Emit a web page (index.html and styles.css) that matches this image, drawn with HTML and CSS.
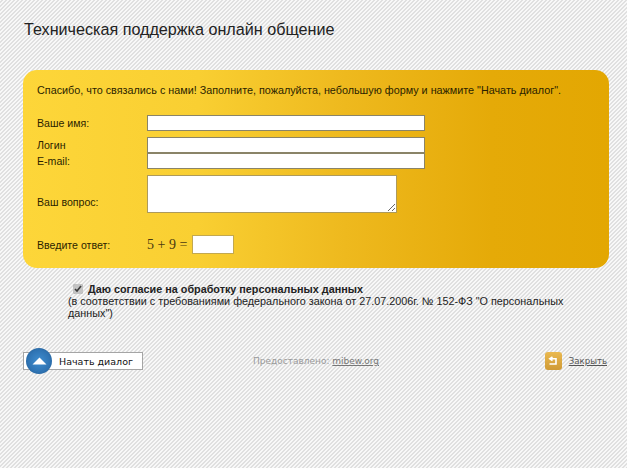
FILE: index.html
```html
<!DOCTYPE html>
<html lang="ru">
<head>
<meta charset="utf-8">
<title>Техническая поддержка онлайн общение</title>
<link rel="stylesheet" href="styles.css">
</head>
<body>
<h1 class="title">Техническая поддержка онлайн общение</h1>
<form class="card">
  <p class="intro">Спасибо, что связались с нами! Заполните, пожалуйста, небольшую форму и нажмите "Начать диалог".</p>
  <div class="row row-name"><label class="lbl">Ваше имя:</label><input class="field" type="text"></div>
  <div class="row row-login"><label class="lbl">Логин</label><input class="field" type="text"></div>
  <div class="row row-mail"><label class="lbl">E-mail:</label><input class="field" type="text"></div>
  <div class="row row-question"><label class="lbl lbl-question">Ваш вопрос:</label><textarea class="area"></textarea></div>
  <div class="row row-captcha"><label class="lbl">Введите ответ:</label><span class="sum">5 + 9 =</span><input class="answer" type="text"></div>
</form>
<div class="consent">
  <div class="agree"><input class="check" type="checkbox" checked><b>Даю согласие на обработку персональных данных</b></div>
  <div class="law">(в соответствии с требованиями федерального закона от 27.07.2006г. № 152-ФЗ "О персональных данных")</div>
</div>
<div class="footer">
  <a class="start">
    <span class="start-icon"><svg width="15" height="8" viewBox="0 0 15 8"><path d="M7.5 0.5 L14.5 7.5 L0.5 7.5 Z" fill="#fff"/></svg></span>
    <span class="start-text">Начать диалог</span>
  </a>
  <div class="credit">Предоставлено: <span class="credit-link">mibew.org</span></div>
  <div class="close">
    <span class="close-icon"><svg width="10" height="10" viewBox="0 0 10 10"><path d="M4.5 1 L1.8 2.8 L4.5 4.6 M2 2.8 H8 V8 H1.5" fill="none" stroke="#fff" stroke-width="1.6"/></svg></span>
    <span class="close-text">Закрыть</span>
  </div>
</div>
</body>
</html>
```
FILE: styles.css
```css
* { box-sizing: border-box; }
html, body { margin: 0; height: 100%; }
body {
  width: 627px;
  height: 468px;
  overflow: hidden;
  padding: 20px 18px 0 23px;
  font-family: "Liberation Sans", Arial, sans-serif;
  color: #222;
  background-color: #f3f3f3;
  background-image: repeating-linear-gradient(-45deg, #e0e0e0 0, #e0e0e0 0.9px, #f8f8f8 0.9px, #f8f8f8 2.828px);
}
.title {
  margin: 0 0 31px 1px;
  height: 19px;
  font-size: 16.15px;
  line-height: 19px;
  font-weight: normal;
  color: #222;
}
.card {
  display: block;
  width: 586px;
  height: 198px;
  padding: 14px 14px 0;
  border-radius: 14px;
  background: linear-gradient(90deg, #fdd639 0%, #f9cf32 30%, #eeb91e 55%, #e5aa08 80%, #e3a702 100%);
  font-size: 10.6px;
  color: #2b1f00;
}
.intro { margin: 0; height: 13px; line-height: 13px; font-size: 10.8px; }
.row { display: flex; align-items: center; }
.lbl { width: 110px; flex: none; }
.lbl-question { margin-top: 15px; }
.row-name { margin-top: 18px; }
.row-login { margin-top: 6px; }
.row-question { margin-top: 6px; }
.row-captcha { margin-top: 22px; }
.field {
  width: 278px;
  height: 16px;
  margin: 0;
  padding: 0;
  border: 1px solid #8a8468;
  background: #fff;
}
.area {
  display: block;
  width: 250px;
  height: 38px;
  margin: 0;
  padding: 0;
  border: 1px solid #ad9a5c;
  background: #fff;
}
.sum {
  width: 45px;
  flex: none;
  font-family: "Liberation Serif", serif;
  font-size: 14px;
  color: #4a3a10;
}
.answer {
  width: 42px;
  height: 19px;
  margin: 0;
  padding: 0;
  border: 1px solid #c2a850;
  background: #fff;
}
.consent {
  margin: 14px 0 0 45px;
  width: 530px;
  font-size: 10.8px;
  line-height: 12px;
  color: #222;
}
.agree { display: flex; align-items: center; height: 13px; }
.check { margin: 0 5px 0 5px; width: 10px; height: 10px; flex: none; accent-color: #c4c4c4; }
.law { margin-top: 0; }
.footer {
  display: flex;
  align-items: center;
  margin-top: 31px;
  width: 586px;
  height: 22px;
  font-family: "DejaVu Sans", Verdana, sans-serif;
  font-size: 9px;
}
.start {
  position: relative;
  display: block;
  width: 120px;
  height: 18px;
  flex: none;
  border: 1px solid #a5a5a5;
  background: #fff;
}
.start-icon {
  position: absolute;
  left: 2px;
  top: -5px;
  width: 26px;
  height: 26px;
  display: flex;
  align-items: center;
  justify-content: center;
  border-radius: 50%;
  background: radial-gradient(circle at 50% 50%, #3f8ed0 0%, #2f74b4 58%, #2a6aa6 72%, #d9e5ea 78%, #eef3f5 100%);
}
.start-text {
  display: block;
  margin-left: 35px;
  line-height: 17px;
  font-size: 9.5px;
  color: #111;
}
.credit {
  margin-left: 110px;
  color: #9a9a9a;
  font-size: 9px;
  white-space: nowrap;
}
.credit-link { color: #777; text-decoration: underline; }
.close { display: flex; align-items: center; margin-left: auto; margin-right: 2px; }
.close-icon {
  width: 17px;
  height: 18px;
  display: flex;
  align-items: center;
  justify-content: center;
  border-radius: 3px;
  background: linear-gradient(180deg, #eab94f, #cf9a35);
}
.close-text {
  margin-left: 7px;
  color: #555;
  text-decoration: underline;
  font-size: 8.6px;
}
```
